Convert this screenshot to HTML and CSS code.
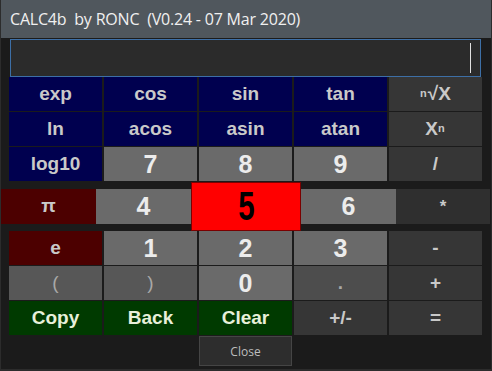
FILE: index.html
```html
<!DOCTYPE html>
<html lang="en">
<head>
    <meta charset="UTF-8">
    <title>CALC4b</title>
    <link rel="stylesheet" href="styles.css">
</head>
<body>
<div class="window">
    <div class="titlebar">CALC4b  by RONC  (V0.24 - 07 Mar 2020)</div>

    <div class="display"><span class="cursor"></span></div>

    <div class="grid">
        <div class="key fn">exp</div>
        <div class="key fn">cos</div>
        <div class="key fn">sin</div>
        <div class="key fn">tan</div>
        <div class="key op"><sup>n</sup>√X</div>

        <div class="key fn">ln</div>
        <div class="key fn">acos</div>
        <div class="key fn">asin</div>
        <div class="key fn">atan</div>
        <div class="key op">X<sup>n</sup></div>

        <div class="key fn">log10</div>
        <div class="key num">7</div>
        <div class="key num">8</div>
        <div class="key num">9</div>
        <div class="key op">/</div>
    </div>

    <div class="mid-row">
        <div class="key const">π</div>
        <div class="key num">4</div>
        <div class="key five"><span>5</span></div>
        <div class="key num">6</div>
        <div class="key op star">*</div>
    </div>

    <div class="grid">
        <div class="key const">e</div>
        <div class="key num">1</div>
        <div class="key num">2</div>
        <div class="key num">3</div>
        <div class="key op">-</div>

        <div class="key paren">(</div>
        <div class="key paren">)</div>
        <div class="key num">0</div>
        <div class="key dot">.</div>
        <div class="key op">+</div>

        <div class="key act">Copy</div>
        <div class="key act">Back</div>
        <div class="key act">Clear</div>
        <div class="key op">+/-</div>
        <div class="key op">=</div>
    </div>

    <div class="footer">
        <button class="close-btn">Close</button>
    </div>
</div>
</body>
</html>
```

FILE: styles.css
```css
body {
    margin: 0;
    background-color: #1b1b1b;
    font-family: "Liberation Sans", Arial, sans-serif;
}

.window {
    width: 492px;
    height: 371px;
    box-sizing: border-box;
    border-left: 1px solid #2c2c2c;
    border-right: 1px solid #2c2c2c;
    border-bottom: 2px solid #2c2c2c;
    background-color: #1b1b1b;
    overflow: hidden;
}

.titlebar {
    height: 38px;
    margin: 0 -1px;
    padding-left: 10px;
    background-color: #50575d;
    color: #f0f0f0;
    font-family: "Open Sans", sans-serif;
    font-size: 16px;
    line-height: 38px;
    white-space: pre;
    letter-spacing: -0.2px;
}

.display {
    height: 38px;
    margin: 1px 10px 0 9px;
    box-sizing: border-box;
    border: 1px solid #3d6fa6;
    background-color: #2b2b2b;
    display: flex;
    justify-content: flex-end;
    align-items: center;
    padding-right: 9px;
}

.cursor {
    width: 1px;
    height: 30px;
    background-color: #e0e0e0;
}

.grid {
    display: grid;
    grid-template-columns: repeat(5, 93px);
    grid-auto-rows: 34px;
    gap: 1px 2px;
    margin-left: 8px;
}

.key {
    display: flex;
    align-items: center;
    justify-content: center;
    font-weight: bold;
    font-size: 19px;
    color: #c9c9c9;
}

.fn {
    background-color: #00004f;
}

.num {
    background-color: #6a6a6a;
    color: #ececec;
    font-size: 25px;
}

.op {
    background-color: #363636;
}

.op sup {
    font-size: 11px;
    margin-right: 1px;
    position: relative;
    top: -1px;
}

.const {
    background-color: #4c0000;
}

.paren {
    background-color: #575757;
    color: #a8a8a8;
    font-weight: normal;
}

.dot {
    background-color: #4d4d4d;
    color: #a8a8a8;
}

.act {
    background-color: #003a00;
    color: #e8f0da;
}

.mid-row {
    display: grid;
    grid-template-columns: 95px 95px 110px 95px 94px;
    height: 50px;
    align-items: center;
}

.mid-row .key {
    height: 35px;
}

.mid-row .five {
    height: 49px;
    box-sizing: border-box;
    border: 1px solid #7a0000;
    background-color: #ff0000;
    color: #000;
    font-size: 41px;
}

.five span {
    display: inline-block;
    transform: scaleX(0.72);
}

.mid-row .star {
    background-color: #2f2f2f;
    font-size: 17px;
    align-items: flex-start;
    padding-top: 8px;
    box-sizing: border-box;
}

.footer {
    display: grid;
    grid-template-columns: repeat(5, 93px);
    gap: 2px;
    margin: 1px 0 0 8px;
}

.close-btn {
    grid-column: 3;
    height: 30px;
    border: 1px solid #454545;
    background-color: #2d2d2d;
    color: #bdbdbd;
    font-family: "Open Sans", sans-serif;
    font-size: 12px;
}
```
